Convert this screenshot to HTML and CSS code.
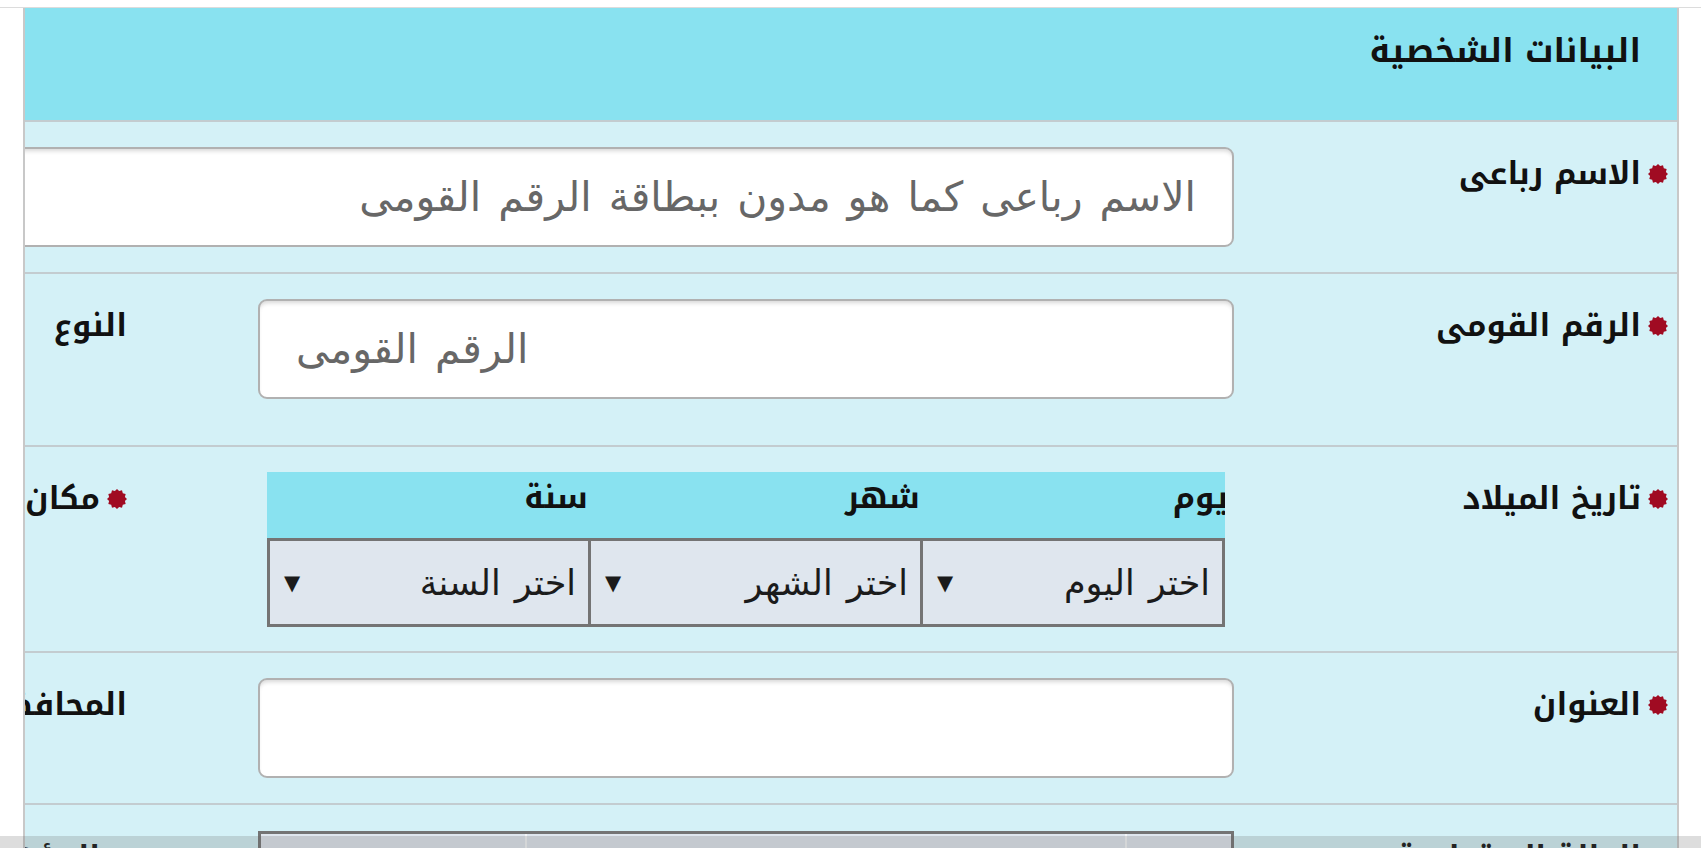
FILE: index.html
```html
<!DOCTYPE html>
<html lang="ar" dir="rtl">
<head>
<meta charset="utf-8">
<title>البيانات الشخصية</title>
<link rel="stylesheet" href="styles.css">
</head>
<body>
<svg class="defs" width="0" height="0" aria-hidden="true">
  <symbol id="req" viewBox="0 0 20 20">
    <polygon fill="#a00b22" points="20,10 17.92,12.12 18.66,15 15.8,15.8 15,18.66 12.12,17.92 10,20 7.88,17.92 5,18.66 4.2,15.8 1.34,15 2.08,12.12 0,10 2.08,7.88 1.34,5 4.2,4.2 5,1.34 7.88,2.08 10,0 12.12,2.08 15,1.34 15.8,4.2 18.66,5 17.92,7.88"/>
  </symbol>
</svg>
<div class="page">
  <div class="panel">
    <div class="panel-head"><h2 class="title">البيانات الشخصية</h2></div>

    <div class="row r1">
      <div class="lbl"><svg class="star"><use href="#req"/></svg><span>الاسم رباعى</span></div>
      <div class="field span3"><input class="txt" type="text" placeholder="الاسم رباعى كما هو مدون ببطاقة الرقم القومى"></div>
    </div>

    <div class="row r2">
      <div class="lbl"><svg class="star"><use href="#req"/></svg><span>الرقم القومى</span></div>
      <div class="field"><input class="txt ltr" type="text" placeholder="الرقم القومى"></div>
      <div class="gap"></div>
      <div class="lbl side"><span>النوع</span></div>
    </div>

    <div class="row r3">
      <div class="lbl"><svg class="star"><use href="#req"/></svg><span>تاريخ الميلاد</span></div>
      <div class="field">
        <div class="date">
          <div class="dh first">يوم</div>
          <div class="dh">شهر</div>
          <div class="dh">سنة</div>
          <div class="sel"><span>اختر اليوم</span><span class="arrow">▼</span></div>
          <div class="sel"><span>اختر الشهر</span><span class="arrow">▼</span></div>
          <div class="sel"><span>اختر السنة</span><span class="arrow">▼</span></div>
        </div>
      </div>
      <div class="gap"></div>
      <div class="lbl side"><svg class="star"><use href="#req"/></svg><span>مكان الميلاد</span></div>
    </div>

    <div class="row r4">
      <div class="lbl"><svg class="star"><use href="#req"/></svg><span>العنوان</span></div>
      <div class="field"><input class="txt" type="text"></div>
      <div class="gap"></div>
      <div class="lbl side"><span>المحافظة</span></div>
    </div>

    <div class="row r5">
      <div class="lbl"><svg class="star"><use href="#req"/></svg><span>الحالة الاجتماعية</span></div>
      <div class="field">
        <div class="opts"><div class="opt o1"></div><div class="opt o2"></div><div class="opt o3"></div></div>
      </div>
      <div class="gap"></div>
      <div class="lbl side"><svg class="star"><use href="#req"/></svg><span>المؤهل</span></div>
    </div>
  </div>
</div>
<div class="scrim"></div>
</body>
</html>
```

FILE: styles.css
```css
* { box-sizing: border-box; }
html, body { margin: 0; padding: 0; background: #ffffff; }
body {
  font-family: "Noto Kufi Arabic", "Noto Sans Arabic", "DejaVu Sans", sans-serif;
  color: #111;
  direction: rtl;
}
.defs { position: absolute; width: 0; height: 0; }
.page {
  margin-top: 7px;
  border-top: 1px solid #dcdcdc;
}
.panel {
  margin: 0 22px 0 23px;
  border-left: 2px solid #c8c8c8;
  border-right: 2px solid #c8c8c8;
  overflow: hidden;
  direction: rtl;
}
.panel-head {
  height: 114px;
  background: #89e2f0;
  border-bottom: 2px solid #c3ccd0;
  padding: 19px 36px 0 0;
}
.title {
  margin: 0;
  font-size: 33px;
  font-weight: 700;
  line-height: 1.5;
  color: #111;
}
.row {
  display: grid;
  grid-template-columns: 433px 996px 111px 400px;
  width: 1940px;
  background: #d4f1f7;
  border-bottom: 2px solid #c3ccd0;
  padding: 25px 0;
  align-items: start;
}
.r2 { padding-bottom: 46px; }
.r3 { padding-bottom: 24px; }
.r5 { padding-top: 26px; height: 80px; border-bottom: 0; }
.lbl {
  display: flex;
  align-items: center;
  gap: 7px;
  padding: 4px 9px 0 0;
  font-size: 31px;
  font-weight: 700;
  line-height: 1.5;
  color: #111;
  white-space: nowrap;
}
.lbl.side { padding-right: 10px; }
.star { width: 20px; height: 20px; flex: none; }
.field { padding: 0 10px; }
.field.span3 { grid-column: 2 / span 3; padding-left: 0; }
.txt {
  display: block;
  width: 100%;
  height: 100px;
  margin: 0;
  border: 2px solid #b1b1b1;
  border-radius: 9px;
  background: #fff;
  box-shadow: inset 0 4px 4px -2px rgba(0,0,0,0.16);
  padding: 0 36px;
  font-family: "DejaVu Sans", sans-serif;
  font-size: 41px;
  word-spacing: 4px;
  color: #333;
  direction: rtl;
  text-align: right;
  outline: none;
}
.txt::placeholder { color: #676767; opacity: 1; }
.txt.ltr { direction: ltr; text-align: left; }
.txt.ltr::placeholder { text-align: left; }
.date {
  margin: 0 9px;
  display: grid;
  grid-template-columns: 305px 332px 321px;
  grid-template-rows: 66px 89px;
}
.dh {
  background: #89e2f0;
  font-size: 31px;
  font-weight: 700;
  line-height: 1.5;
  padding-top: 3px;
  text-align: right;
  white-space: nowrap;
}
.dh.first { overflow: hidden; text-indent: -3px; }
.sel {
  display: flex;
  align-items: center;
  background: #dfe6ee;
  border: 3px solid #747474;
  border-right-width: 0;
  padding: 0 12px 0 14px;
  font-family: "DejaVu Sans", sans-serif;
  font-size: 35px;
  word-spacing: 3px;
  color: #1b1b1b;
  white-space: nowrap;
}
.sel:nth-child(4) { border-right-width: 3px; }
.arrow {
  margin-right: auto;
  font-family: "DejaVu Sans", sans-serif;
  font-size: 21px;
  color: #1b1b1b;
}
.opts {
  display: grid;
  grid-template-columns: 106px 600px 1fr;
  height: 70px;
  background: #dfe6ee;
  border: 3px solid #747474;
}
.opt { border-left: 2px solid #f4f6f8; }
.opt.o3 { border-left: 0; }
.scrim {
  position: fixed;
  left: 0;
  right: 0;
  bottom: 0;
  height: 12px;
  background: rgba(100, 100, 100, 0.22);
}
```
